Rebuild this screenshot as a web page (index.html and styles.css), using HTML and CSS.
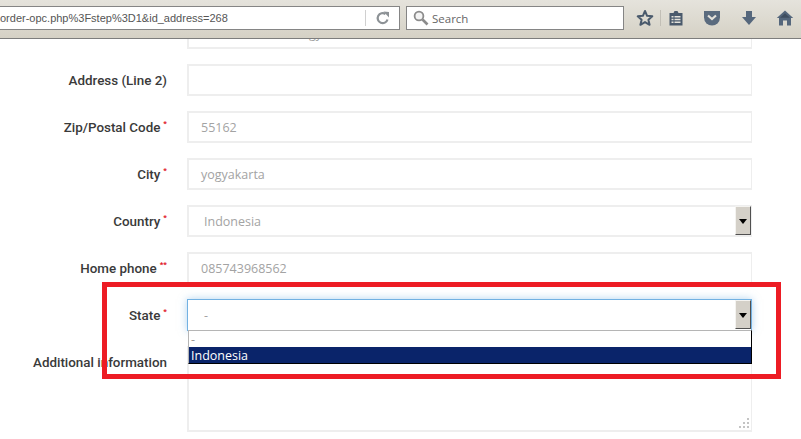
FILE: index.html
```html
<!DOCTYPE html>
<html lang="en">
<head>
  <meta charset="UTF-8" />
  <title>Address</title>
  <link rel="stylesheet" href="styles.css">
</head>
<body>
  <div class="toolbar">
    <div class="urlbar">
      <span class="url">order-opc.php%3Fstep%3D1&amp;id_address=268</span>
      <span class="reload">
        <svg width="14" height="14" viewBox="0 0 14 14"><path d="M11.5 8.5A5 5 0 1 1 9.5 3" fill="none" stroke="#8d9296" stroke-width="2.2"/><path d="M7.5 0.5l5.5 0.5v5.5z" fill="#8d9296"/></svg>
      </span>
    </div>
    <div class="searchbar">
      <svg width="16" height="16" viewBox="0 0 16 16"><circle cx="6" cy="6" r="4.4" fill="#f4f4f4" stroke="#8c8c8c" stroke-width="1.8"/><path d="M9.5 9.5l5 5" stroke="#8c8c8c" stroke-width="2.6"/></svg>
      <span>Search</span>
    </div>
    <div class="tools">
      <svg class="tool-star" width="18" height="18" viewBox="0 0 18 18"><path d="M9 2l2.1 4.8 5.2.5-3.9 3.4 1.2 5.1L9 13.1l-4.6 2.7 1.2-5.1-3.9-3.4 5.2-.5z" fill="none" stroke="#4a5a6c" stroke-width="2" stroke-linejoin="round"/></svg>
      <span class="tool-sep"></span>
      <svg class="tool-list" width="16" height="16" viewBox="0 0 16 16"><path d="M1.5 3h4l1-2h3l1 2h4v12.500h-13z" fill="#4a5a6c"/><path d="M3.500 6h9v1.500h-9zM3.500 8.800h9v1.500h-9zM3.500 11.600h9v1.500h-9z" fill="#e4e2db"/><path d="M5.500 6h1v7h-1z" fill="#4a5a6c"/></svg>
      <svg class="tool-pocket" width="18" height="16" viewBox="0 0 18 16"><path d="M1 1h16v6.500a8 8 0 0 1-16 0z" fill="#5a6b7e"/><path d="M5 5.500l4 3.500 4-3.500" fill="none" stroke="#e4e2db" stroke-width="2.200"/></svg>
      <svg class="tool-down" width="16" height="16" viewBox="0 0 16 16"><path d="M5 1h6v6h4l-7 8-7-8h4z" fill="#55677c"/></svg>
      <svg class="tool-home" width="18" height="16" viewBox="0 0 18 16"><path d="M9 .5L.8 8h2.200v7.500h4v-5h4v5h4V8h2.200z" fill="#55677c"/><path d="M9 3.200L4 7.800h10z" fill="#3f4e60"/></svg>
    </div>
  </div>

  <div class="form">
    <div class="row">
      <label></label>
      <div class="field"><span class="peek">gy</span></div>
    </div>
    <div class="row">
      <label>Address (Line 2)</label>
      <div class="field"></div>
    </div>
    <div class="row">
      <label>Zip/Postal Code<sup>*</sup></label>
      <div class="field">55162</div>
    </div>
    <div class="row">
      <label>City<sup>*</sup></label>
      <div class="field">yogyakarta</div>
    </div>
    <div class="row">
      <label>Country<sup>*</sup></label>
      <div class="field select">
        <span class="select-value">Indonesia</span>
        <span class="select-btn"></span>
      </div>
    </div>
    <div class="row">
      <label>Home phone<sup>**</sup></label>
      <div class="field">085743968562</div>
    </div>
    <div class="row">
      <label>State<sup>*</sup></label>
      <div class="field select focused">
        <span class="select-value">-</span>
        <span class="select-btn"></span>
        <div class="dropdown">
          <div class="option">-</div>
          <div class="option selected">Indonesia</div>
        </div>
      </div>
    </div>
    <div class="row">
      <label>Additional information</label>
      <div class="field area">
        <svg class="grip" width="11" height="11" viewBox="0 0 11 11" fill="#c4c4c4"><path d="M8 0h2v2H8zM4 4h2v2H4zM8 4h2v2H8zM0 8h2v2H0zM4 8h2v2H4zM8 8h2v2H8z"/></svg>
      </div>
    </div>
  </div>

  <div class="highlight"></div>
</body>
</html>
```

FILE: styles.css
```css
* {
  margin: 0;
  padding: 0;
  box-sizing: border-box;
}

body {
  position: relative;
  height: 439px;
  overflow: hidden;
  background-color: #fff;
  font-family: "Open Sans", "Liberation Sans", sans-serif;
}

/* browser chrome */
.toolbar {
  position: relative;
  z-index: 2;
  height: 39px;
  display: flex;
  align-items: flex-start;
  padding-top: 6px;
  background: linear-gradient(#e5e3dc, #d5d1c5);
  border-bottom: 1px solid #7d7d7d;
}

.urlbar {
  width: 400px;
  height: 24px;
  flex-shrink: 0;
  display: flex;
  align-items: center;
  justify-content: space-between;
  background-color: #fff;
  border: 1px solid #858585;
  border-left: none;
  font-family: "Liberation Sans", sans-serif;
  font-size: 11px;
  color: #555;
  overflow: hidden;
}

.url {
  white-space: nowrap;
}

.reload {
  width: 34px;
  height: 16px;
  display: flex;
  align-items: center;
  justify-content: center;
  border-left: 1px solid #d0d0d0;
}

.searchbar {
  width: 218px;
  height: 24px;
  margin-left: 6px;
  flex-shrink: 0;
  display: flex;
  align-items: center;
  gap: 3px;
  padding-left: 6px;
  background-color: #fff;
  border: 1px solid #858585;
  font-size: 11.5px;
  color: #666;
}

.tools {
  flex: 1;
  display: flex;
  align-items: center;
  height: 24px;
  padding-left: 12px;
}

.tool-sep {
  width: 1px;
  height: 16px;
  margin: 0 7px 0 6px;
  background-color: #c2bfb6;
}

.tool-pocket {
  margin-left: 19px;
}

.tool-down {
  margin-left: 20px;
}

.tool-home {
  margin-left: 19px;
}

/* form */
.form {
  display: flex;
  flex-direction: column;
  gap: 15px;
  margin-top: -22px;
}

.row {
  display: flex;
  align-items: flex-start;
  gap: 20px;
}

.row label {
  width: 167px;
  height: 32px;
  flex-shrink: 0;
  display: flex;
  align-items: center;
  justify-content: flex-end;
  padding-top: 1px;
  font-family: Roboto, "Liberation Sans", sans-serif;
  font-size: 13.4px;
  font-weight: 500;
  color: #3a3a3a;
  white-space: nowrap;
}

.row label sup {
  align-self: flex-start;
  margin: 8px 0 0 3px;
  font-size: 8px;
  line-height: 7px;
  font-weight: 700;
  color: #e0101c;
}

.field {
  position: relative;
  width: 565px;
  height: 32px;
  display: flex;
  align-items: center;
  padding-left: 12px;
  border: 2px solid #eeeeee;
  border-width: 2px 1px 2px 2px;
  background-color: #fff;
  font-size: 12.5px;
  color: #a3a3a3;
}

.peek {
  margin-left: 108px;
}

.select-value {
  padding-left: 3px;
}

.select-btn {
  position: absolute;
  top: -1px;
  right: 0;
  width: 16px;
  height: 29px;
  background-color: #d4d0c8;
  border: 1px solid;
  border-color: #f4f3f0 #505050 #505050 #f4f3f0;
}

.select-btn::after {
  content: "";
  position: absolute;
  top: 12px;
  left: 3px;
  border: 4px solid transparent;
  border-top: 5px solid #000;
  border-bottom: none;
}

.focused {
  border: 1px solid #72b1e2;
  box-shadow: 0 0 8px rgba(114, 177, 226, 0.55);
  padding-left: 13px;
}

.focused .select-btn {
  top: 0;
}

.dropdown {
  position: absolute;
  z-index: 1;
  top: 30px;
  left: 0;
  width: 564px;
  background-color: #fff;
  border: 1px solid #000;
  border-color: #b5b5b5 #000 #000 #b5b5b5;
  font-size: 12.5px;
}

.option {
  height: 16px;
  line-height: 18px;
  padding-left: 2px;
  color: #9a9a9a;
}

.option.selected {
  background-color: #0a246a;
  color: #fff;
}

.area {
  height: 86px;
}

.grip {
  position: absolute;
  right: 1px;
  bottom: 1px;
}

/* annotation drawn over the screenshot */
.highlight {
  position: absolute;
  z-index: 3;
  left: 102px;
  top: 282px;
  width: 679px;
  height: 97px;
  border: 5px solid #ed1c24;
  pointer-events: none;
}
```
